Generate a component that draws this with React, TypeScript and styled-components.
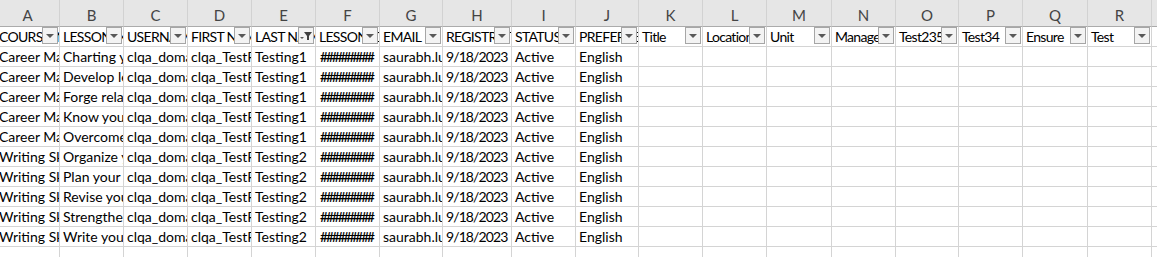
import React from "react"
import styled, { createGlobalStyle } from "styled-components"

const GlobalStyle = createGlobalStyle`
  html, body {
    margin: 0;
    padding: 0;
    background: #ffffff;
    overflow: hidden;
  }
  body {
    font-family: Lato, "Liberation Sans", sans-serif;
  }
`

// visible column widths, column A is scrolled 4px off the left edge
const COLUMN_WIDTHS = [64, 64, 64, 64, 64, 64, 63, 69, 64, 63, 64, 64, 65, 64, 63, 64, 65, 64, 64]
const LETTERS = "ABCDEFGHIJKLMNOPQRS".split("")
const TEMPLATE = COLUMN_WIDTHS.map((w) => `${w}px`).join(" ")

const HEADERS = [
  "COURSE_NAME",
  "LESSON_NAME",
  "USERNAME",
  "FIRST NAME",
  "LAST NAME",
  "LESSON_DATE",
  "EMAIL",
  "REGISTRATION",
  "STATUS",
  "PREFERRED",
  "Title",
  "Location",
  "Unit",
  "Manager",
  "Test235",
  "Test34",
  "Ensure",
  "Test",
]

const LESSONS = [
  "Charting your path",
  "Develop leadership",
  "Forge relationships",
  "Know yourself",
  "Overcome obstacles",
  "Organize your writing",
  "Plan your writing",
  "Revise your writing",
  "Strengthen your writing",
  "Write your draft",
]

const ROWS = LESSONS.map((lesson, i) => {
  const career = i < 5
  return [
    career ? "Career Management" : "Writing Skills",
    lesson,
    "clqa_domain",
    "clqa_TestFirst",
    career ? "Testing1" : "Testing2",
    "#########",
    "saurabh.luthra@example.com",
    "9/18/2023",
    "Active",
    "English",
  ]
})

const Sheet = styled.div`
  width: 1157px;
  height: 257px;
  overflow: hidden;
  background: #ffffff;
`

const Grid = styled.div`
  display: grid;
  grid-template-columns: ${TEMPLATE};
  margin-left: -4px;
`

const LetterCell = styled.div`
  box-sizing: border-box;
  height: 27px;
  padding-top: 6px;
  background: #e6e6e6;
  border-right: 1px solid #d2d2d2;
  border-bottom: 1px solid #ababab;
  color: #444444;
  font-size: 15px;
  text-align: center;
`

const Cell = styled.div<{ $squeeze?: number }>`
  position: relative;
  box-sizing: border-box;
  height: 20px;
  padding: 0 1px 0 3px;
  border-right: 1px solid #d4d4d4;
  border-bottom: 1px solid #d4d4d4;
  color: #000000;
  font-size: 14px;
  line-height: 20px;
  letter-spacing: ${(p) => p.$squeeze ?? 0}px;
  white-space: nowrap;
  overflow: hidden;
`

const Hashes = styled.span`
  display: inline-block;
  padding-left: 1px;
  letter-spacing: -2px;
  font-size: 13.6px;
  font-weight: 600;
`

const FilterButton = styled.div`
  position: absolute;
  top: 0;
  right: 1px;
  box-sizing: border-box;
  width: 16px;
  height: 17px;
  border: 1px solid #a6a6a6;
  background: #f3f3f3;
  display: flex;
  align-items: center;
  justify-content: center;
`

const Arrow = () => (
  <svg width="14" height="15" viewBox="0 0 14 15">
    <polygon points="3,6 11,6 7,10" fill="#595959" />
  </svg>
)

const Funnel = () => (
  <svg width="14" height="15" viewBox="0 0 14 15">
    <polygon points="5,4 13,4 10,8 10,12 8,12 8,8" fill="#404040" />
    <polygon points="1,9 5,9 3,11" fill="#595959" />
  </svg>
)

const App = () => {
  return (
    <>
      <GlobalStyle />
      <Sheet>
        <Grid>
          {LETTERS.map((l) => (
            <LetterCell key={l}>{l}</LetterCell>
          ))}

          {LETTERS.map((l, i) => (
            <Cell key={`h-${l}`} $squeeze={-0.7}>
              {HEADERS[i] ?? ""}
              {i < HEADERS.length && (
                <FilterButton>{i === 4 ? <Funnel /> : <Arrow />}</FilterButton>
              )}
            </Cell>
          ))}

          {ROWS.concat([[]]).map((row, r) =>
            LETTERS.map((l, c) => (
              <Cell key={`${r}-${l}`} $squeeze={c === 7 ? -0.9 : 0}>
                {c === 5 && row[c] ? <Hashes>{row[c]}</Hashes> : row[c] ?? ""}
              </Cell>
            )),
          )}
        </Grid>
      </Sheet>
    </>
  )
}

export default App
